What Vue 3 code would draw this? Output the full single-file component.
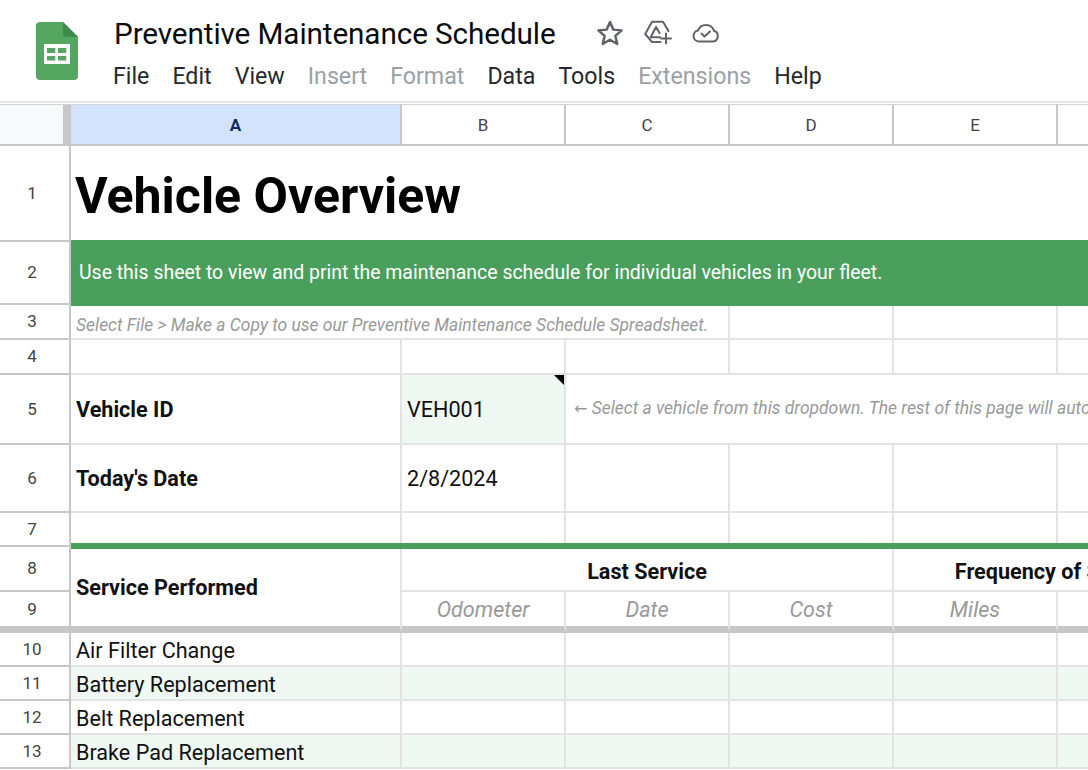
<script setup>
const columns = ['B', 'C', 'D', 'E', 'F']

const empty = (n = 1) => Array.from({ length: n }, () => ({ text: '' }))

const rows = [
  { num: 1, cells: [{ text: 'Vehicle Overview', span: 6, cls: 'title' }] },
  {
    num: 2,
    cells: [
      {
        text: 'Use this sheet to view and print the maintenance schedule for individual vehicles in your fleet.',
        span: 6,
        cls: 'banner',
      },
    ],
  },
  {
    num: 3,
    cells: [
      {
        text: 'Select File > Make a Copy to use our Preventive Maintenance Schedule Spreadsheet.',
        span: 3,
        cls: 'note',
      },
      ...empty(3),
    ],
  },
  { num: 4, cells: empty(6) },
  {
    num: 5,
    cells: [
      { text: 'Vehicle ID', cls: 'bold' },
      { text: 'VEH001', cls: 'picked' },
      {
        lead: '←',
        text: ' Select a vehicle from this dropdown. The rest of this page will automatically update.',
        span: 4,
        cls: 'note hint',
      },
    ],
  },
  {
    num: 6,
    cells: [{ text: "Today's Date", cls: 'bold' }, { text: '2/8/2024' }, ...empty(4)],
  },
  { num: 7, cells: empty(6) },
  {
    num: 8,
    cells: [
      { text: 'Service Performed', rows: 2, cls: 'bold service heavy' },
      { text: 'Last Service', span: 3, cls: 'group' },
      { text: 'Frequency of Service', span: 2, cls: 'group' },
    ],
  },
  {
    num: 9,
    heavy: true,
    cells: [
      { text: 'Odometer', cls: 'sub' },
      { text: 'Date', cls: 'sub' },
      { text: 'Cost', cls: 'sub' },
      { text: 'Miles', cls: 'sub' },
      { text: '', cls: 'sub' },
    ],
  },
  { num: 10, list: true, cells: [{ text: 'Air Filter Change' }, ...empty(5)] },
  { num: 11, list: true, tint: true, cells: [{ text: 'Battery Replacement' }, ...empty(5)] },
  { num: 12, list: true, cells: [{ text: 'Belt Replacement' }, ...empty(5)] },
  { num: 13, list: true, tint: true, cells: [{ text: 'Brake Pad Replacement' }, ...empty(5)] },
]

const cellStyle = (cell) => ({
  gridColumn: `span ${cell.span || 1}`,
  gridRow: `span ${cell.rows || 1}`,
})
</script>

<template>
  <div class="app">
    <header class="topbar">
      <svg class="logo" viewBox="0 0 42 58" width="42" height="58">
        <path d="M4 0h23l15 15v39a4 4 0 0 1-4 4H4a4 4 0 0 1-4-4V4a4 4 0 0 1 4-4z" fill="#55a660" />
        <path d="M27 0l15 15H31a4 4 0 0 1-4-4z" fill="#3d8a4c" />
        <path d="M8 22h26v20H8z" fill="#fff" />
        <path d="M11 26h8.300v5H11zM22 26h8.300v5H22zM11 34h8.300v4.500H11zM22 34h8.300v4.500H22z" fill="#55a660" />
      </svg>
      <div class="doc">
        <div class="title-row">
          <h1 class="doc-name">Preventive Maintenance Schedule</h1>
          <div class="doc-icons">
            <svg class="star" viewBox="0 0 24 24" width="30" height="30">
              <path d="M12 3.200l2.700 6.100 6.600.600-5 4.400 1.500 6.500L12 17.400l-5.800 3.400 1.500-6.500-5-4.400 6.600-.600z" />
            </svg>
            <svg class="drive" viewBox="0 0 28 28" width="28" height="28">
              <path d="M24.500 12L19 2.700H8L1.200 15 8 23h8.500" />
              <path d="M12 8L6.700 18.300H16M12 8l3.500 6" />
              <path d="M22 14.500v10M17 19.500h10" />
            </svg>
            <svg class="cloud" viewBox="0 0 28 20" width="28" height="20">
              <path d="M7 18.500a5.500 5.500 0 0 1-1-10.900A8.500 8.500 0 0 1 22 7.800a5.500 5.500 0 0 1-1 10.700z" />
              <path d="M9.500 10.500l3 3 5.500-5" />
            </svg>
          </div>
        </div>
        <nav class="menu">
          <span>File</span>
          <span>Edit</span>
          <span>View</span>
          <span class="off">Insert</span>
          <span class="off">Format</span>
          <span>Data</span>
          <span>Tools</span>
          <span class="off">Extensions</span>
          <span>Help</span>
        </nav>
      </div>
    </header>

    <div class="sheet">
      <div class="corner"></div>
      <div class="col-head selected">A</div>
      <div v-for="c in columns" :key="c" class="col-head">{{ c }}</div>

      <template v-for="row in rows" :key="row.num">
        <div class="row-head" :class="{ heavy: row.heavy }">{{ row.num }}</div>
        <div
          v-for="(cell, i) in row.cells"
          :key="i"
          class="cell"
          :class="[cell.cls, { tint: row.tint, heavy: row.heavy, list: row.list }]"
          :style="cellStyle(cell)"
        >
          <span class="txt"><span v-if="cell.lead" class="arrow">{{ cell.lead }}</span>{{ cell.text }}</span>
        </div>
      </template>

      <!-- thick green border of the table header, drawn over the gridlines -->
      <div class="green-rule"></div>
    </div>
  </div>
</template>

<style scoped>
.app {
  width: 1088px;
  height: 770px;
  overflow: hidden;
  background: #fff;
  font-family: Roboto, "Liberation Sans", sans-serif;
  color: #111;
}

.topbar {
  height: 103px;
  box-sizing: border-box;
  display: flex;
  padding: 22px 0 0 36px;
  gap: 37px;
  border-bottom: 2px solid #e6e6e6;
}
.logo {
  flex: none;
}
.doc {
  margin-top: -5px;
}
.title-row {
  display: flex;
  align-items: center;
  height: 34px;
  margin-top: -1px;
}
.doc-name {
  margin: 0 0 0 -1px;
  font-size: 29.700px;
  font-weight: 400;
  letter-spacing: -0.1px;
  color: #0c0c0c;
  white-space: nowrap;
}
.doc-icons {
  display: flex;
  align-items: center;
  margin-left: 39px;
}
.doc-icons svg {
  fill: none;
  stroke: #5f6368;
  stroke-width: 2;
  stroke-linejoin: round;
  stroke-linecap: round;
}
.drive {
  margin: 0 20px 0 19px;
}
.menu {
  display: flex;
  gap: 23px;
  margin-top: 12px;
  margin-left: -2px;
  font-size: 23.200px;
  color: #26282b;
}
.menu .off {
  color: #9aa0a6;
}

.sheet {
  position: relative;
  display: grid;
  grid-template-columns: 71px 331px repeat(5, 164px);
  grid-template-rows: 41px 96px 63px 35px 35px 70px 68px 34px 45px 41px 34px 34px 34px 34px;
  border-top: 1px solid #d4d4d4;
  margin-top: 1px;
}

.corner {
  background: #f8f9fa;
  border-right: 8px solid #c7c7c7;
  border-bottom: 2px solid #c7c7c7;
}
.col-head {
  display: flex;
  align-items: center;
  justify-content: center;
  padding-top: 1px;
  font-size: 17px;
  color: #444;
  border-right: 2px solid #c7c7c7;
  border-bottom: 2px solid #c7c7c7;
}
.col-head.selected {
  background: #d3e3fd;
  color: #0b2a63;
  font-weight: 700;
}

.row-head {
  display: flex;
  align-items: center;
  justify-content: center;
  padding: 0 5px 1px 0;
  font-size: 17px;
  color: #444;
  border-right: 2px solid #c7c7c7;
  border-bottom: 2px solid #c7c7c7;
}

.cell {
  display: flex;
  align-items: center;
  min-width: 0;
  overflow: hidden;
  box-sizing: border-box;
  padding-left: 5px;
  font-size: 21.600px;
  white-space: nowrap;
  border-right: 2px solid #e3e3e3;
  border-bottom: 2px solid #e3e3e3;
}
.heavy {
  border-bottom: 7px solid #c7c7c7;
}
.tint {
  background: #eff8f3;
}
.list {
  padding-top: 2px;
}

.title {
  padding: 4px 0 0 4px;
  font-size: 50px;
  font-weight: 700;
  color: #000;
  border-right: none;
  border-bottom: none;
}
.banner {
  position: relative;
  z-index: 1;
  margin: -2px 0 -1px;
  padding: 0 0 2px 8px;
  background: #4a9f5d;
  color: #fff;
  font-size: 19.460px;
  border: none;
}
.note {
  padding-top: 7px;
  font-size: 17.450px;
  font-style: italic;
  color: #999;
}
.hint {
  padding: 0 0 3px 8px;
  border-right: none;
}
.arrow {
  font-family: "DejaVu Sans", sans-serif;
  font-style: normal;
  font-size: 16px;
}
.bold {
  font-weight: 700;
}
.service {
  padding-top: 2px;
}
.picked {
  position: relative;
  background: #eff8f3;
}
.picked::after {
  content: "";
  position: absolute;
  top: 0;
  right: 0;
  border-top: 10px solid #000;
  border-left: 10px solid transparent;
}
.green-rule {
  position: absolute;
  grid-column: 2 / -1;
  grid-row: 8 / 9;
  left: 0;
  right: 0;
  bottom: -2px;
  height: 6px;
  background: #4a9f5d;
}
.group {
  justify-content: center;
  font-weight: 700;
  padding: 5px 0 0;
}
.sub {
  justify-content: center;
  padding-left: 0;
  font-style: italic;
  color: #999;
}
</style>

<style>
html,
body {
  margin: 0;
  overflow: hidden;
}
</style>
